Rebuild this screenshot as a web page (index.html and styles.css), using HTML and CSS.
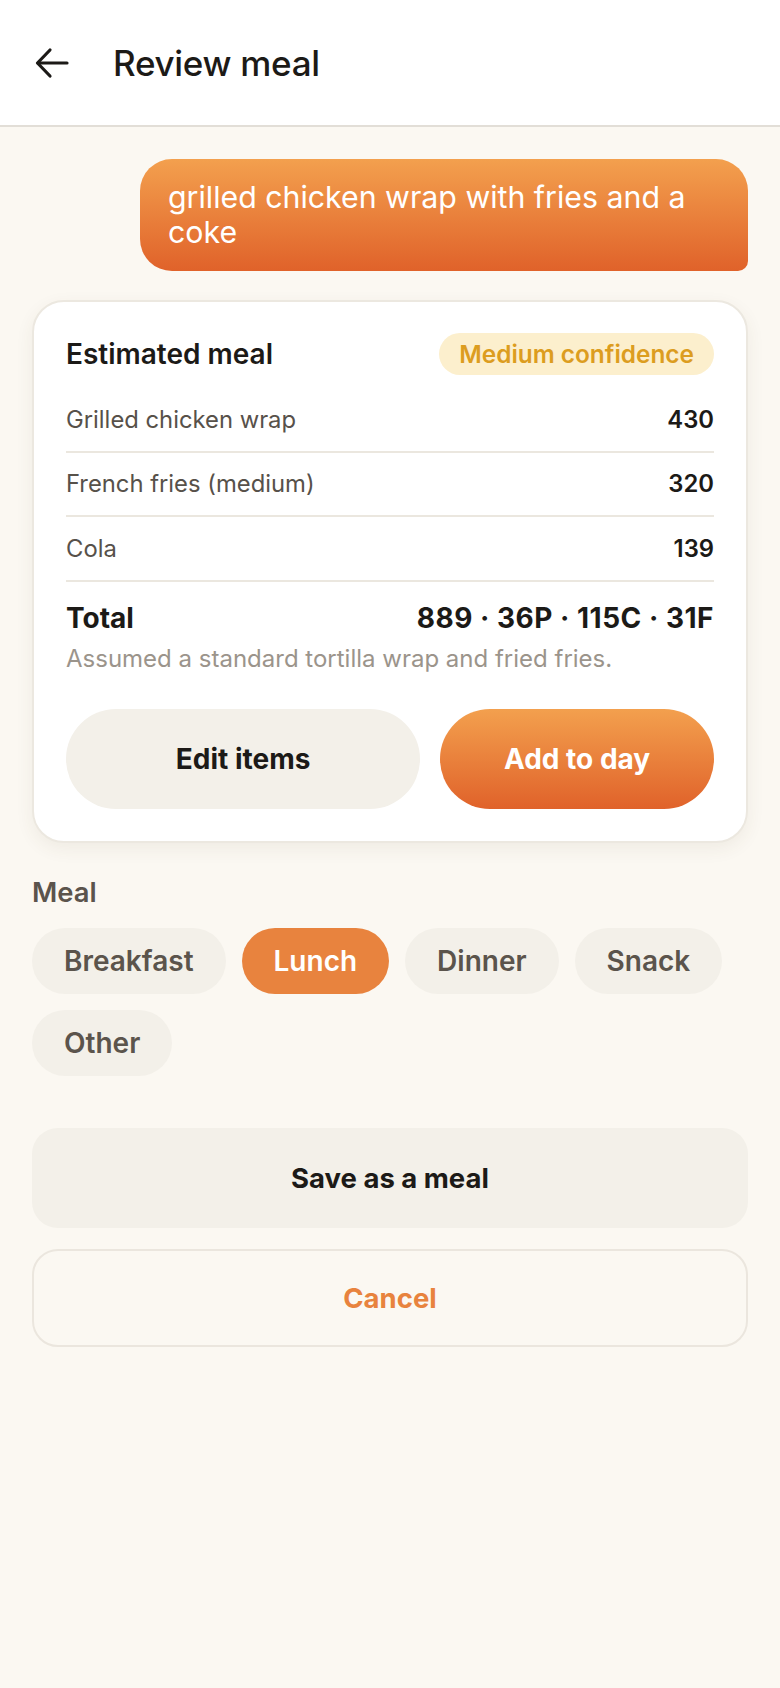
FILE: index.html
```html
<!DOCTYPE html>
<html lang="en">
<head>
<meta charset="utf-8">
<title>Review meal</title>
<link rel="stylesheet" href="styles.css">
</head>
<body>
<header class="topbar">
  <button class="back" aria-label="Back">
    <svg width="36" height="36" viewBox="0 0 36 36" fill="none" stroke="#1c1a17" stroke-width="3.2" stroke-linecap="round" stroke-linejoin="round"><path d="M33 18H4"/><path d="M16 5L3.5 18L16 31"/></svg>
  </button>
  <h1 class="title">Review meal</h1>
</header>
<main class="content">
  <div class="bubble-row">
    <div class="bubble">grilled chicken wrap with fries and a coke</div>
  </div>
  <section class="card">
    <div class="card-head">
      <h2 class="card-title">Estimated meal</h2>
      <span class="badge">Medium confidence</span>
    </div>
    <ul class="items">
      <li class="item"><span class="item-name">Grilled chicken wrap</span><span class="item-cal">430</span></li>
      <li class="item"><span class="item-name">French fries (medium)</span><span class="item-cal">320</span></li>
      <li class="item"><span class="item-name">Cola</span><span class="item-cal">139</span></li>
    </ul>
    <div class="total">
      <span class="total-label">Total</span>
      <span class="total-value">889 · 36P · 115C · 31F</span>
    </div>
    <p class="note">Assumed a standard tortilla wrap and fried fries.</p>
    <div class="actions">
      <button class="btn btn-soft">Edit items</button>
      <button class="btn btn-primary">Add to day</button>
    </div>
  </section>
  <h3 class="label">Meal</h3>
  <div class="chips">
    <button class="chip">Breakfast</button>
    <button class="chip chip-active">Lunch</button>
    <button class="chip">Dinner</button>
    <button class="chip">Snack</button>
    <button class="chip">Other</button>
  </div>
  <button class="wide wide-soft">Save as a meal</button>
  <button class="wide wide-outline">Cancel</button>
</main>
</body>
</html>
```
FILE: styles.css
```css
* { box-sizing: border-box; }
html, body { margin: 0; padding: 0; }
body {
  background: #fbf8f2;
  font-family: Inter, "Noto Sans", "Liberation Sans", sans-serif;
  color: #1c1a17;
  min-height: 1688px;
}
button { font-family: inherit; border: none; cursor: pointer; }

.topbar {
  height: 127px;
  background: #ffffff;
  border-bottom: 2px solid #e2ded7;
  display: flex;
  align-items: center;
  padding: 0 0 0 33px;
}
.back {
  background: none;
  padding: 0;
  width: 38px;
  height: 38px;
  display: flex;
  align-items: center;
  justify-content: center;
}
.title {
  margin: 0 0 0 42px;
  font-size: 35px;
  font-weight: 500;
  letter-spacing: -0.3px;
  color: #1c1a17;
}

.content {
  padding: 32px 32px 40px;
  display: flex;
  flex-direction: column;
}

.bubble-row { display: flex; justify-content: flex-end; }
.bubble {
  width: 608px;
  background: linear-gradient(180deg, #f3a04e 0%, #e0622a 100%);
  color: #ffffff;
  font-size: 30.3px;
  line-height: 35px;
  padding: 21px 28px 21px 28px;
  border-radius: 32px 32px 10px 32px;
}

.card {
  margin-top: 29px;
  background: #ffffff;
  border: 2px solid #ece8e0;
  border-radius: 32px;
  padding: 31px 32px 32px;
  box-shadow: 0 6px 18px rgba(90, 70, 40, 0.07);
}
.card-head {
  display: flex;
  align-items: center;
  justify-content: space-between;
  margin-bottom: 13px;
}
.card-title {
  margin: 0;
  font-size: 28px;
  font-weight: 600;
  color: #1c1a17;
}
.badge {
  height: 42px;
  display: inline-flex;
  align-items: center;
  padding: 0 20px;
  border-radius: 21px;
  background: #fcefcd;
  color: #dc9d1f;
  font-size: 24.4px;
  font-weight: 600;
}
.items { list-style: none; margin: 0; padding: 0; }
.item {
  display: flex;
  justify-content: space-between;
  align-items: center;
  padding: 19.5px 0 19px;
  line-height: 24px;
  font-size: 23.8px;
  border-bottom: 2px solid #ebe7df;
}
.item-name { color: #57514a; }
.item-cal { font-weight: 600; color: #1c1a17; }

.total {
  display: flex;
  justify-content: space-between;
  align-items: center;
  padding-top: 19px;
  font-size: 28px;
  font-weight: 700;
  line-height: 34px;
}
.total-value { letter-spacing: 0.5px; }
.note {
  margin: 9px 0 0;
  font-size: 24px;
  line-height: 30px;
  color: #9b948b;
}
.actions {
  margin-top: 35px;
  display: grid;
  grid-template-columns: 353fr 273fr;
  gap: 20px;
}
.btn {
  height: 100px;
  border-radius: 50px;
  font-size: 28px;
  font-weight: 700;
}
.btn-soft { background: #f3f0e9; color: #1c1a17; }
.btn-primary {
  background: linear-gradient(180deg, #f3a04e 0%, #e0622a 100%);
  color: #ffffff;
}

.label {
  margin: 33px 0 0;
  font-size: 27.4px;
  line-height: 32px;
  font-weight: 600;
  color: #5b544c;
}
.chips {
  margin-top: 20px;
  display: flex;
  flex-wrap: wrap;
  gap: 16px 16px;
}
.chip {
  height: 66px;
  padding: 0 32px;
  border-radius: 33px;
  background: #f3f0e9;
  color: #5b544c;
  font-size: 28px;
  font-weight: 600;
}
.chip-active { background: #e8833e; color: #ffffff; }

.wide {
  width: 100%;
  border-radius: 26px;
  font-size: 27.5px;
  font-weight: 700;
}
.wide-soft {
  margin-top: 52px;
  height: 100px;
  background: #f3f0e9;
  color: #1c1a17;
}
.wide-outline {
  margin-top: 21px;
  height: 98px;
  background: transparent;
  border: 2px solid #ebe6de;
  color: #e8833e;
}
```
